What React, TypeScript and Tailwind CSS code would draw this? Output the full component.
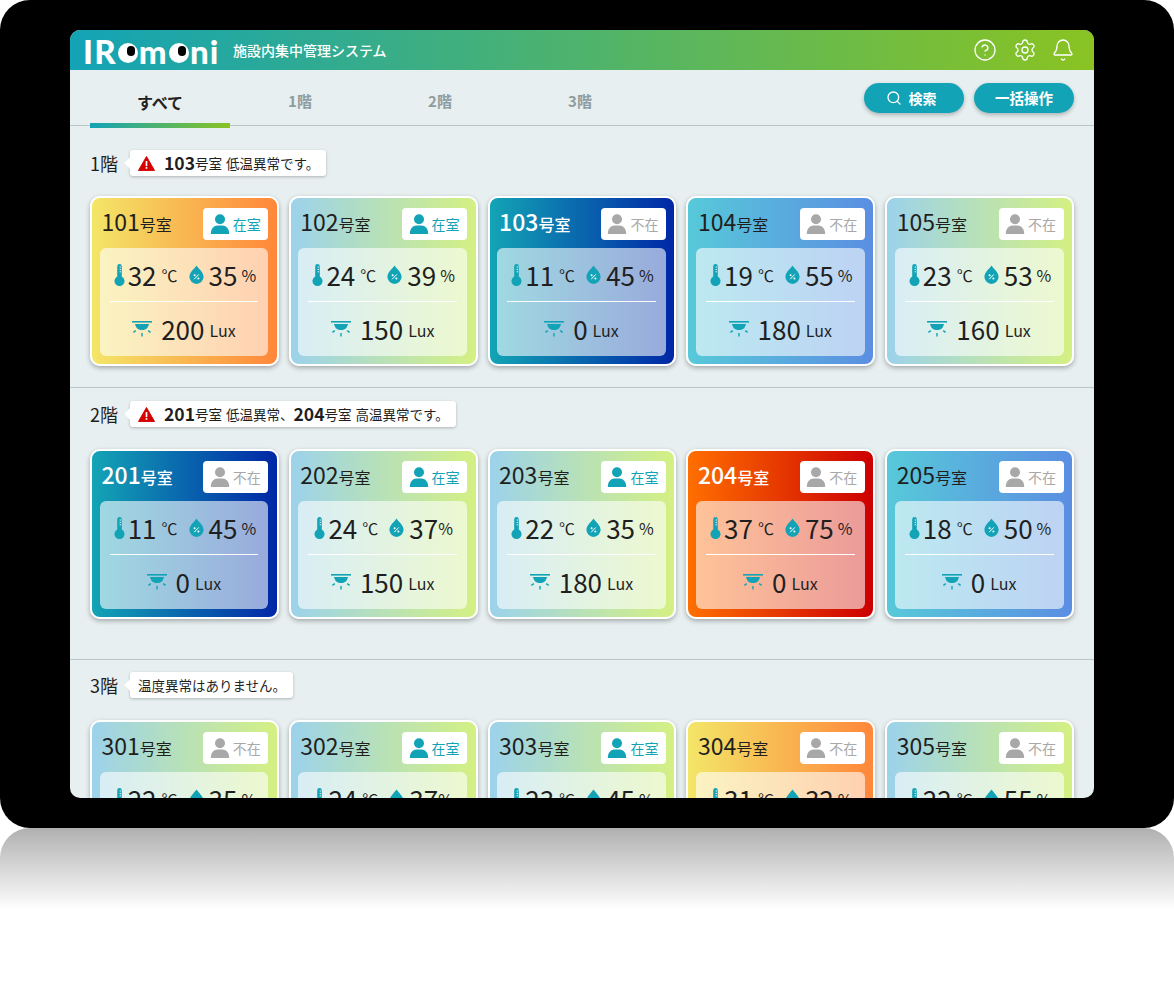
import * as React from 'react';
import { Search, CircleHelp, Settings, Bell } from 'lucide-react';

type Tone = 'warm' | 'normal' | 'dark' | 'cool' | 'hot';

interface Room {
  no: string;
  tone: Tone;
  present: boolean;
  temp: number;
  hum: number;
  lux: number;
  tight?: boolean;
}

const toneClass: Record<Tone, string> = {
  warm: 'bg-linear-to-r/srgb from-[#f3e668] to-[#ff873a]',
  normal: 'bg-linear-to-r/srgb from-[#9cd2eb] to-[#d4f083]',
  dark: 'bg-linear-to-r/srgb from-[#13a4b5] to-[#0027a6]',
  cool: 'bg-linear-to-r/srgb from-[#57c9d9] to-[#5b8ee2]',
  hot: 'bg-linear-to-r/srgb from-[#ff6f00] to-[#cc0000]',
};

const floor1: Room[] = [
  { no: '101', tone: 'warm', present: true, temp: 32, hum: 35, lux: 200 },
  { no: '102', tone: 'normal', present: true, temp: 24, hum: 39, lux: 150 },
  { no: '103', tone: 'dark', present: false, temp: 11, hum: 45, lux: 0 },
  { no: '104', tone: 'cool', present: false, temp: 19, hum: 55, lux: 180 },
  { no: '105', tone: 'normal', present: false, temp: 23, hum: 53, lux: 160 },
];

const floor2: Room[] = [
  { no: '201', tone: 'dark', present: false, temp: 11, hum: 45, lux: 0 },
  { no: '202', tone: 'normal', present: true, temp: 24, hum: 37, lux: 150, tight: true },
  { no: '203', tone: 'normal', present: true, temp: 22, hum: 35, lux: 180 },
  { no: '204', tone: 'hot', present: false, temp: 37, hum: 75, lux: 0 },
  { no: '205', tone: 'cool', present: false, temp: 18, hum: 50, lux: 0 },
];

const floor3: Room[] = [
  { no: '301', tone: 'normal', present: false, temp: 22, hum: 35, lux: 150 },
  { no: '302', tone: 'normal', present: true, temp: 24, hum: 37, lux: 150, tight: true },
  { no: '303', tone: 'normal', present: true, temp: 23, hum: 45, lux: 180 },
  { no: '304', tone: 'warm', present: false, temp: 31, hum: 32, lux: 0 },
  { no: '305', tone: 'normal', present: false, temp: 22, hum: 55, lux: 0 },
];

function PersonIcon({ className }: { className: string }) {
  return (
    <svg viewBox="0 0 20 20" className={className} fill="currentColor">
      <circle cx="10" cy="5.2" r="5" />
      <path d="M0.8 20 C0.8 14.6 4 11.6 7.5 11.6 H12.5 C16 11.6 19.2 14.6 19.2 20 Z" />
    </svg>
  );
}

function ThermoIcon() {
  return (
    <svg viewBox="0 0 11 22" className="h-[22px] w-[11px] text-[#13a3b6]">
      <path
        fill="currentColor"
        d="M3.2 2.4 a2.3 2.3 0 0 1 4.6 0 V12.6 a5 5 0 1 1 -4.6 0 Z"
      />
      <path stroke="#fff" strokeWidth="1" d="M5.6 3 H7 M5.6 5.4 H7 M5.6 7.8 H7" opacity="0.9" />
    </svg>
  );
}

function DropIcon() {
  return (
    <svg viewBox="0 0 15 19" className="h-[19px] w-[15px] text-[#13a3b6]">
      <path
        fill="currentColor"
        d="M7.5 0.4 C9.4 3.4 14.6 7.2 14.6 11.8 A7.1 7.1 0 0 1 0.4 11.8 C0.4 7.2 5.6 3.4 7.5 0.4 Z"
      />
      <path stroke="#fff" strokeWidth="1" d="M5.2 14.2 L9.8 9.4" />
      <circle cx="5.6" cy="10.2" r="1" fill="#fff" />
      <circle cx="9.4" cy="13.6" r="1" fill="#fff" />
    </svg>
  );
}

function LampIcon() {
  return (
    <svg viewBox="0 0 20 16" className="h-[16px] w-[20px] text-[#13a3b6]">
      <rect x="0" y="0" width="20" height="1.6" fill="currentColor" />
      <path d="M3 3 H17 C16 7.5 13.5 9 10 9 C6.5 9 4 7.5 3 3 Z" fill="currentColor" />
      <path
        stroke="currentColor"
        strokeWidth="1.4"
        d="M10 12 V15.4 M3.8 9.6 L1.4 11.4 M16.2 9.6 L18.6 11.4"
      />
    </svg>
  );
}

function RoomCard({ room }: { room: Room }) {
  const light = room.tone === 'dark' || room.tone === 'hot';
  return (
    <div
      className={`${toneClass[room.tone]} h-[170px] rounded-[10px] border-2 border-white pl-[7.5px] pr-[8.5px] pt-[10px] shadow-[0_2px_5px_rgba(0,0,0,0.3)]`}
    >
      <div className="flex h-[32px] items-center justify-between">
        <div
          className={`pb-[6px] pl-[2px] leading-none ${light ? 'font-medium text-white' : 'text-[#1f1f1f]'}`}
        >
          <span className="text-[23px]">{room.no}</span>
          <span className="text-[16px]">号室</span>
        </div>
        <div
          className={`flex h-[32px] w-[65px] items-center justify-center gap-[3px] rounded-[4px] bg-white pr-[1px] text-[14px] ${room.present ? 'text-[#13a3b6]' : 'text-[#a8a8a8]'}`}
        >
          <PersonIcon className="h-[20px] w-[20px]" />
          <span>{room.present ? '在室' : '不在'}</span>
        </div>
      </div>
      <div className="mt-[8px] h-[108px] rounded-[6px] bg-white/60 px-[10px] text-[#1f1f1f]">
        <div className="flex h-[54px] items-center justify-center border-b border-white pl-[2px]">
          <ThermoIcon />
          <span className="ml-[3px] text-[26px] leading-none">{room.temp}</span>
          <span className="ml-[5px] text-[16px] leading-none">℃</span>
          <span className="ml-[11px]">
            <DropIcon />
          </span>
          <span className="ml-[5px] text-[26px] leading-none">{room.hum}</span>
          <span className={`${room.tight ? 'ml-0' : 'ml-[4px]'} text-[16px] leading-none`}>%</span>
        </div>
        <div className="flex h-[53px] items-center justify-center">
          <LampIcon />
          <span className="ml-[9px] text-[26px] leading-none">{room.lux}</span>
          <span className="ml-[5px] pt-[3px] text-[16px] leading-none">Lux</span>
        </div>
      </div>
    </div>
  );
}

function Notice({ children }: { children: React.ReactNode }) {
  return (
    <div className="relative ml-[12px] flex h-[26px] items-center whitespace-pre rounded-[3px] bg-white pl-[8px] pr-[7px] text-[13.5px] text-[#1f1f1f] shadow-[0_1px_3px_rgba(0,0,0,0.25)] [word-spacing:1px]">
      <span className="absolute left-[-4px] top-[9px] h-[8px] w-[8px] rotate-45 bg-white" />
      {children}
    </div>
  );
}

function Warn() {
  return (
    <svg viewBox="0 0 18 16" className="mr-[9px] h-[15px] w-[17px]">
      <path d="M9 0.5 L17.6 15.5 H0.4 Z" fill="#d40000" stroke="#d40000" strokeLinejoin="round" />
      <rect x="8.1" y="5.4" width="1.8" height="5.4" fill="#fff" />
      <rect x="8.1" y="11.8" width="1.8" height="1.8" fill="#fff" />
    </svg>
  );
}

function Num({ children }: { children: React.ReactNode }) {
  return <span className="text-[17.5px] font-bold leading-none">{children}</span>;
}

function Section({
  title,
  notice,
  rooms,
  className,
  gridClass,
}: {
  title: string;
  notice: React.ReactNode;
  rooms: Room[];
  className: string;
  gridClass: string;
}) {
  return (
    <section className={`px-5 ${className}`}>
      <div className="flex h-[26px] items-center">
        <span className="pb-[1px] text-[18px] leading-none text-[#1f1f1f]">{title}</span>
        <Notice>{notice}</Notice>
      </div>
      <div className={`grid grid-cols-5 gap-x-[10px] ${gridClass}`}>
        {rooms.map((room) => (
          <RoomCard key={room.no} room={room} />
        ))}
      </div>
    </section>
  );
}

function LogoEye() {
  return (
    <span className="relative mx-[1px] mb-[1px] inline-block h-[20px] w-[20px] rounded-full bg-white">
      <span className="absolute left-[9px] top-[3px] h-[10px] w-[8px] rounded-full bg-black" />
    </span>
  );
}

export default function App() {
  const tabs = ['すべて', '1階', '2階', '3階'];

  return (
    <div className="h-[1000px] w-[1174px] bg-white font-['Noto_Sans_CJK_JP','Noto_Sans',sans-serif]">
      <div className="h-[828px] rounded-[30px] bg-black pb-[30px] pl-[70px] pr-[80px] pt-[30px]">
        <div className="h-[768px] overflow-hidden rounded-[10px] bg-[#e7eff1]">
          {/* Header */}
          <header className="flex h-[40px] items-center bg-linear-to-r/srgb from-[#13a3b6] to-[#8ac322] pl-[13px] pr-[19px] text-white">
            <div className="flex h-[40px] w-[150px] items-end pb-[6px] font-['Lato',sans-serif] text-[33px] font-black leading-[26px] tracking-[1.2px]">
              <span>IR</span>
              <LogoEye />
              <span>m</span>
              <LogoEye />
              <span>ni</span>
            </div>
            <span className="text-[14px] font-medium">施設内集中管理システム</span>
            <div className="ml-auto flex items-center">
              <CircleHelp className="h-[24px] w-[24px]" strokeWidth={1.3} />
              <Settings className="ml-[16px] h-[24px] w-[24px]" strokeWidth={1.3} />
              <Bell className="ml-[14px] h-[24px] w-[24px]" strokeWidth={1.3} />
            </div>
          </header>

          {/* Tabs */}
          <div className="flex h-[56px] items-center justify-between border-b border-[#b9c6c8] px-5">
            <div className="flex h-[56px]">
              {tabs.map((tab, i) => (
                <div
                  key={tab}
                  className={`relative flex w-[140px] items-center justify-center pt-[8px] font-bold ${i === 0 ? 'text-[16px] text-[#222]' : 'text-[15px] text-[#8e9c9e]'}`}
                >
                  {tab}
                  {i === 0 && (
                    <span className="absolute bottom-[-2px] left-0 h-[5px] w-full bg-linear-to-r/srgb from-[#13a3b6] to-[#8ac322]" />
                  )}
                </div>
              ))}
            </div>
            <div className="flex gap-[10px] pt-[1px]">
              <button className="flex h-[30px] w-[100px] items-center justify-center gap-[7px] rounded-full bg-[#13a3b6] pr-[6px] text-[14px] font-bold text-white shadow-[0_2px_4px_rgba(0,0,0,0.25)]">
                <Search className="h-[16px] w-[16px]" strokeWidth={2} />
                検索
              </button>
              <button className="flex h-[30px] w-[100px] items-center justify-center rounded-full bg-[#13a3b6] text-[14.5px] font-bold text-white shadow-[0_2px_4px_rgba(0,0,0,0.25)]">
                一括操作
              </button>
            </div>
          </div>

          <Section
            title="1階"
            className="h-[262px] border-b border-[#b9c6c8] pt-[24px]"
            gridClass="mt-[20px]"
            rooms={floor1}
            notice={
              <>
                <Warn />
                <Num>103</Num>号室 低温異常です。
              </>
            }
          />
          <Section
            title="2階"
            className="h-[272px] border-b border-[#b9c6c8] pt-[13px]"
            gridClass="mt-[22px]"
            rooms={floor2}
            notice={
              <>
                <Warn />
                <Num>201</Num>号室 低温異常、<Num>204</Num>号室 高温異常です。
              </>
            }
          />
          <Section
            title="3階"
            className="pt-[12px]"
            gridClass="mt-[22px]"
            rooms={floor3}
            notice="温度異常はありません。"
          />
        </div>
      </div>
      {/* Reflection */}
      <div className="h-[82px] rounded-t-[30px] bg-linear-to-b/srgb from-[#b0b0b0] to-white" />
    </div>
  );
}
